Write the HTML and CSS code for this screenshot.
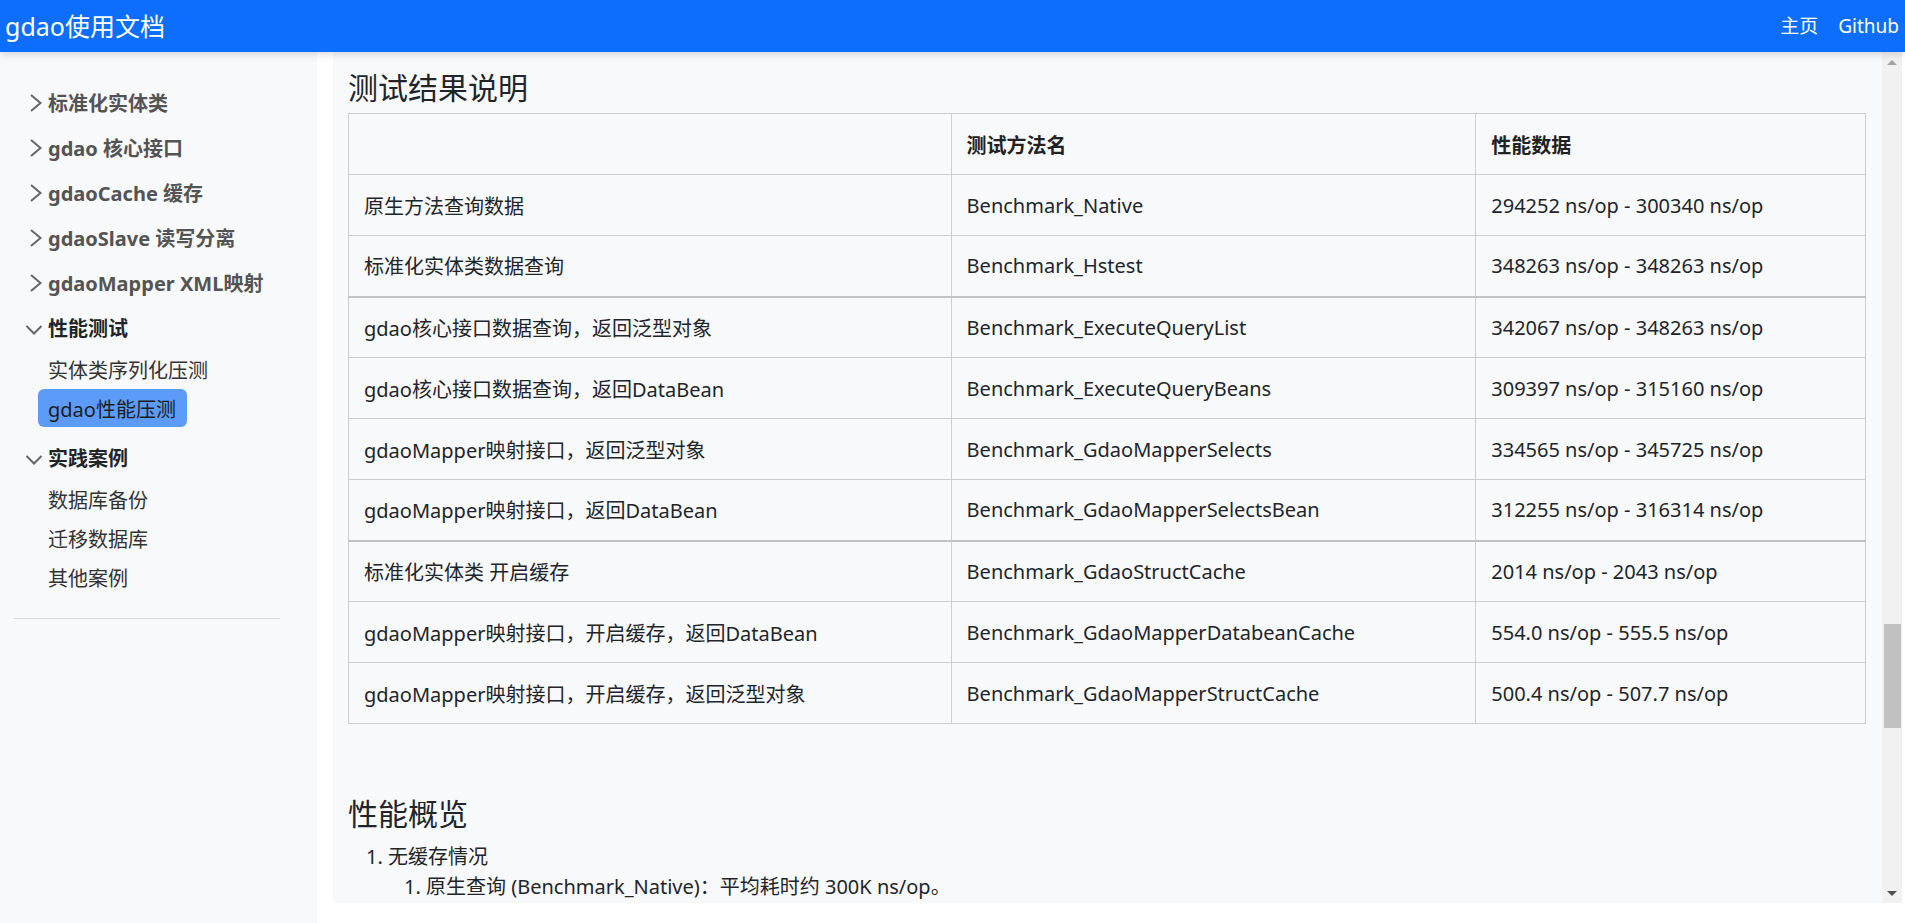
FILE: index.html
```html
<!DOCTYPE html>
<html lang="zh-CN">
<head>
<meta charset="utf-8">
<title>gdao使用文档</title>
<link rel="stylesheet" href="styles.css">
</head>
<body>
<header class="navbar">
  <a class="brand" href="#">gdao使用文档</a>
  <nav class="nav-links">
    <a href="#">主页</a>
    <a href="#">Github</a>
  </nav>
</header>
<div class="layout">
  <aside class="sidebar">
    <ul class="menu">
      <li class="menu-item collapsed"><svg class="chev" viewBox="0 0 20 20"><path d="M6 2 L15.5 10 L6 18"/></svg><span>标准化实体类</span></li>
      <li class="menu-item collapsed"><svg class="chev" viewBox="0 0 20 20"><path d="M6 2 L15.5 10 L6 18"/></svg><span>gdao 核心接口</span></li>
      <li class="menu-item collapsed"><svg class="chev" viewBox="0 0 20 20"><path d="M6 2 L15.5 10 L6 18"/></svg><span>gdaoCache 缓存</span></li>
      <li class="menu-item collapsed"><svg class="chev" viewBox="0 0 20 20"><path d="M6 2 L15.5 10 L6 18"/></svg><span>gdaoSlave 读写分离</span></li>
      <li class="menu-item collapsed"><svg class="chev" viewBox="0 0 20 20"><path d="M6 2 L15.5 10 L6 18"/></svg><span>gdaoMapper XML映射</span></li>
      <li class="menu-item expanded"><svg class="chev down" viewBox="0 0 20 20"><path d="M1.5 6 L9 13.5 L16.5 6"/></svg><span>性能测试</span></li>
      <li class="submenu">
        <a class="sub-link" href="#">实体类序列化压测</a>
        <a class="sub-link active" href="#">gdao性能压测</a>
      </li>
      <li class="menu-item expanded"><svg class="chev down" viewBox="0 0 20 20"><path d="M1.5 6 L9 13.5 L16.5 6"/></svg><span>实践案例</span></li>
      <li class="submenu">
        <a class="sub-link" href="#">数据库备份</a>
        <a class="sub-link" href="#">迁移数据库</a>
        <a class="sub-link" href="#">其他案例</a>
      </li>
    </ul>
    <hr class="side-rule">
  </aside>
  <div class="main-wrap">
    <main class="main">
      <div class="content">
        <h3 class="section-title">测试结果说明</h3>
        <table class="bench">
          <colgroup><col class="c1"><col class="c2"><col class="c3"></colgroup>
          <thead>
            <tr><th></th><th>测试方法名</th><th>性能数据</th></tr>
          </thead>
          <tbody>
            <tr><td>原生方法查询数据</td><td>Benchmark_Native</td><td>294252 ns/op - 300340 ns/op</td></tr>
            <tr><td>标准化实体类数据查询</td><td>Benchmark_Hstest</td><td>348263 ns/op - 348263 ns/op</td></tr>
            <tr class="group-start"><td>gdao核心接口数据查询，返回泛型对象</td><td>Benchmark_ExecuteQueryList</td><td>342067 ns/op - 348263 ns/op</td></tr>
            <tr><td>gdao核心接口数据查询，返回DataBean</td><td>Benchmark_ExecuteQueryBeans</td><td>309397 ns/op - 315160 ns/op</td></tr>
            <tr><td>gdaoMapper映射接口，返回泛型对象</td><td>Benchmark_GdaoMapperSelects</td><td>334565 ns/op - 345725 ns/op</td></tr>
            <tr><td>gdaoMapper映射接口，返回DataBean</td><td>Benchmark_GdaoMapperSelectsBean</td><td>312255 ns/op - 316314 ns/op</td></tr>
            <tr class="group-start"><td>标准化实体类 开启缓存</td><td>Benchmark_GdaoStructCache</td><td>2014 ns/op - 2043 ns/op</td></tr>
            <tr><td>gdaoMapper映射接口，开启缓存，返回DataBean</td><td>Benchmark_GdaoMapperDatabeanCache</td><td>554.0 ns/op - 555.5 ns/op</td></tr>
            <tr><td>gdaoMapper映射接口，开启缓存，返回泛型对象</td><td>Benchmark_GdaoMapperStructCache</td><td>500.4 ns/op - 507.7 ns/op</td></tr>
          </tbody>
        </table>
        <h3 class="section-title second">性能概览</h3>
        <ol class="summary">
          <li>无缓存情况
            <ol>
              <li>原生查询 (Benchmark_Native)：平均耗时约 300K ns/op。</li>
            </ol>
          </li>
        </ol>
      </div>
      <div class="scrollbar">
        <div class="arrow up"></div>
        <div class="track"><div class="thumb"></div></div>
        <div class="arrow down"></div>
      </div>
    </main>
  </div>
</div>
</body>
</html>
```
FILE: styles.css
```css
* { box-sizing: border-box; }
html, body {
  margin: 0;
  padding: 0;
  height: 923px;
  overflow: hidden;
  background: #ffffff;
  font-family: "Noto Sans", "Noto Sans CJK SC", sans-serif;
  color: #212529;
}
a { text-decoration: none; color: inherit; }

.navbar {
  position: relative;
  z-index: 2;
  height: 52px;
  background: #0d6efd;
  display: flex;
  align-items: center;
  justify-content: space-between;
  padding: 0 6px 0 5px;
  box-shadow: 0 2px 8px rgba(0, 0, 0, 0.16);
}
.brand {
  color: #ffffff;
  font-size: 25px;
  line-height: 30px;
}
.nav-links {
  display: flex;
  gap: 20px;
}
.nav-links a {
  color: #ffffff;
  font-size: 19px;
  line-height: 24px;
}

.layout {
  display: flex;
  height: 871px;
}
.sidebar {
  width: 317px;
  flex: none;
  background: #f8f9fa;
  padding: 28px 0 0 0;
}
.menu {
  list-style: none;
  margin: 0;
  padding: 0;
}
.menu-item {
  position: relative;
  height: 45px;
  display: flex;
  align-items: center;
  padding-left: 48px;
  font-size: 20px;
  font-weight: 700;
}
.menu-item.collapsed { color: #545454; }
.menu-item.expanded { color: #212529; }
.chev {
  position: absolute;
  left: 25px;
  top: 12.5px;
  width: 20px;
  height: 20px;
  fill: none;
  stroke: #666666;
  stroke-width: 2;
}
.chev.down { top: 15px; }
.submenu {
  display: flex;
  flex-direction: column;
  gap: 1px;
  margin-bottom: 8px;
}
.sub-link {
  display: flex;
  align-items: center;
  height: 38px;
  margin-left: 38px;
  padding: 0 10px;
  width: max-content;
  border-radius: 6px;
  font-size: 20px;
  color: #333333;
}
.sub-link.active {
  background: #5c9bf8;
  color: #1d1d1d;
  width: 149px;
}
.side-rule {
  margin: 22px 0 0 13px;
  width: 267px;
  border: 0;
  border-top: 1px solid #dcdcdc;
}

.main-wrap {
  flex: 1;
  padding: 0 3px 20px 16px;
  background: #ffffff;
}
.main {
  height: 851px;
  background: #f8f9fa;
  display: flex;
  overflow: hidden;
}
.content {
  flex: 1;
  padding: 18px 16px 0 15px;
  overflow: hidden;
}
.section-title {
  margin: 0 0 7px 0;
  font-size: 30px;
  line-height: 36px;
  font-weight: 400;
  color: #212529;
}
.section-title.second {
  margin: 72px 0 10px 0;
}
.bench {
  width: 1518px;
  border-collapse: collapse;
  font-size: 20px;
  color: #212529;
}
.bench col.c1 { width: 603px; }
.bench col.c2 { width: 525px; }
.bench col.c3 { width: 390px; }
.bench th, .bench td {
  height: 61px;
  padding: 0 15px;
  border: 1px solid #cdcdcd;
  text-align: left;
  vertical-align: middle;
  white-space: nowrap;
}
.bench th {
  font-weight: 700;
  color: #222222;
}
.bench tr.group-start td {
  border-top: 2px solid #c2c2c2;
}
.summary {
  margin: 0;
  padding-left: 40px;
  font-size: 20px;
  line-height: 30px;
}
.summary ol {
  margin: 0;
  padding-left: 38px;
}

.scrollbar {
  width: 20px;
  flex: none;
  background: #f1f1f1;
  display: flex;
  flex-direction: column;
}
.arrow {
  height: 20px;
  flex: none;
  display: flex;
  align-items: center;
  justify-content: center;
}
.arrow::before {
  content: "";
  width: 0;
  height: 0;
  border-left: 5px solid transparent;
  border-right: 5px solid transparent;
}
.arrow.up::before { border-bottom: 5px solid #a3a3a3; }
.arrow.down::before { border-top: 5px solid #505050; }
.track {
  flex: 1;
  padding: 552px 0 0 2px;
}
.thumb {
  width: 17px;
  height: 104px;
  background: #c1c1c1;
}
```
